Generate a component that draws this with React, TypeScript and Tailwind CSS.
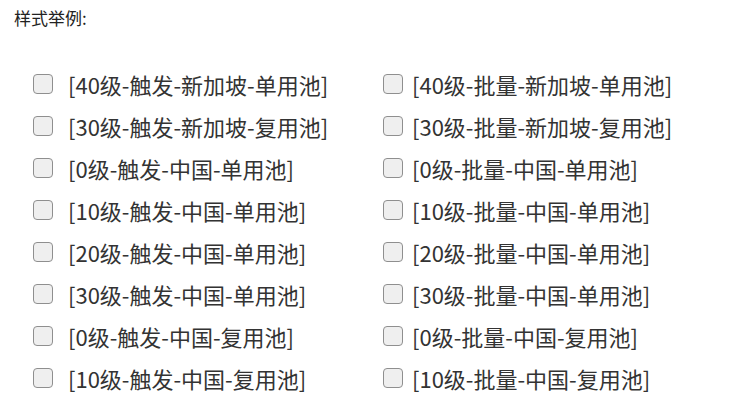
const left = [
  '[40级-触发-新加坡-单用池]',
  '[30级-触发-新加坡-复用池]',
  '[0级-触发-中国-单用池]',
  '[10级-触发-中国-单用池]',
  '[20级-触发-中国-单用池]',
  '[30级-触发-中国-单用池]',
  '[0级-触发-中国-复用池]',
  '[10级-触发-中国-复用池]',
];

const right = left.map((s) => s.replace('触发', '批量'));

function Box() {
  return <span className="w-[20px] h-[20px] shrink-0 rounded-[4px] border-[1.5px] border-[#8f8f8f] bg-[#efefef]" />;
}

export default function App() {
  return (
    <div className="w-[746px] h-[418px] bg-white text-[#333] overflow-hidden" style={{ fontFamily: '"Noto Sans CJK SC", sans-serif' }}>
      <div className="pl-[14px] pt-[6px] text-[17px] leading-[24px] text-[#222]">样式举例:</div>
      <div className="grid grid-cols-[350px_350px] mt-[33px] pl-[33px]">
        {left.map((s, i) => (
          <div key={i} className="contents">
            <label className="flex items-center h-[42px]">
              <Box />
              <span className="ml-[15px] text-[22px] leading-none">{s}</span>
            </label>
            <label className="flex items-center h-[42px]">
              <Box />
              <span className="ml-[9px] text-[22px] leading-none">{right[i]}</span>
            </label>
          </div>
        ))}
      </div>
    </div>
  );
}
